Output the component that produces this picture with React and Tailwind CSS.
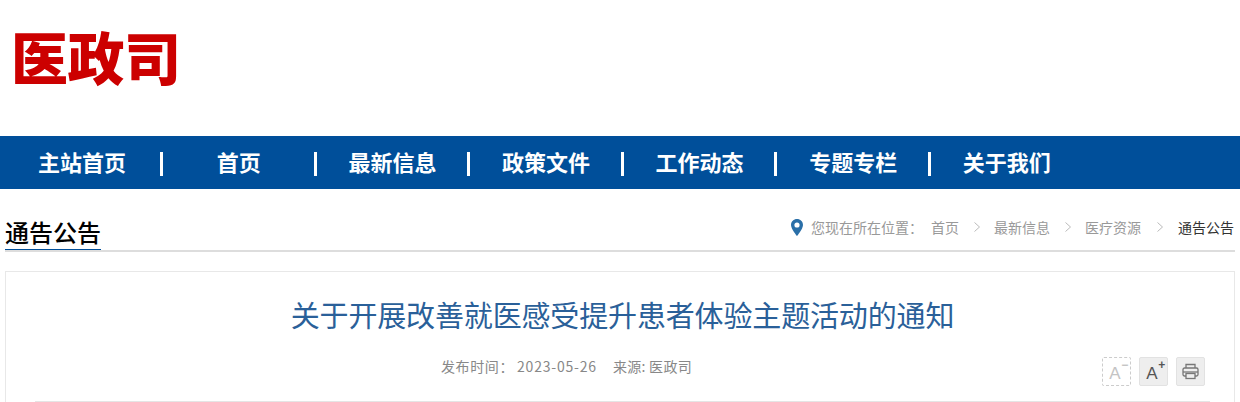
import React from 'react';

const cjk = "font-['Microsoft_YaHei','Noto_Sans_CJK_SC',sans-serif]";
const navItems = ['主站首页', '首页', '最新信息', '政策文件', '工作动态', '专题专栏', '关于我们'];
const crumbs = ['首页', '最新信息', '医疗资源'];

function PinIcon() {
  return (
    <svg width="12" height="17" viewBox="0 0 12 17" className="shrink-0">
      <path fillRule="evenodd" fill="#2a6fa8" d="M6 0C2.7 0 0 2.6 0 5.9 0 9.8 6 17 6 17s6-7.2 6-11.1C12 2.6 9.3 0 6 0zm0 3.4a2.6 2.6 0 1 1 0 5.2 2.6 2.6 0 0 1 0-5.2z" />
    </svg>
  );
}

function Chevron() {
  return (
    <svg width="6" height="10" viewBox="0 0 6 10" className="shrink-0">
      <path d="M0.5 0.5L5.5 5L0.5 9.5" fill="none" stroke="#aaa" strokeWidth="0.8" />
    </svg>
  );
}

function FontButton({ sign, dashed }) {
  return (
    <div className={dashed
      ? "w-[29px] h-[29px] rounded-[2px] border border-dashed border-[#ccc] bg-white flex items-center justify-center text-[#c4c4c4]"
      : "w-[29px] h-[29px] rounded-[2px] border border-[#e2e2e2] bg-[#eeeeee] flex items-center justify-center text-[#555]"}>
      <span className="relative mt-[3px] ml-[-3px] text-[17px] leading-none font-['Liberation_Sans',sans-serif]">
        A
        <span className="absolute left-[12px] top-[-6px] text-[12px] font-bold leading-none">{sign}</span>
      </span>
    </div>
  );
}

export default function App() {
  return (
    <div className={`w-[1240px] h-[402px] overflow-hidden bg-white ${cjk}`}>
      <div className="h-[136px] pl-[11px] pt-[19px]">
        <div className="text-[57px] leading-[72px] font-black text-[#cc0000] tracking-[-0.5px]">医政司</div>
      </div>

      <div className="h-[53px] bg-[#004f9a] flex pl-[2px]">
        {navItems.map((item, i) => (
          <div key={item} className={i === 0 ? "w-[160px] h-full flex items-center relative" : "w-[153.6px] h-full flex items-center relative"}>
            <span className="w-full text-center text-[22px] font-bold text-white mt-[-2px]">{item}</span>
            {i < navItems.length - 1 && (
              <span className="absolute right-[-1px] top-[16px] w-[3px] h-[24px] bg-white"></span>
            )}
          </div>
        ))}
      </div>

      <div className="mx-[5px] h-[63px] border-b-2 border-[#dddddd] flex items-end justify-between">
        <div className="text-[24px] leading-[30px] h-[33px] mb-[-1px] mt-[-2px] font-medium text-black border-b border-[#004f9a] relative top-[-1px]">通告公告</div>
        <div className="flex items-center h-[20px] mb-[13px] text-[14px] text-[#999] mr-[1px]">
          <PinIcon />
          <span className="ml-[8px]">您现在所在位置：</span>
          <span className="ml-[8px]">首页</span>
          {crumbs.slice(1).map((c) => (
            <React.Fragment key={c}>
              <span className="mx-[14.5px]"><Chevron /></span>
              <span>{c}</span>
            </React.Fragment>
          ))}
          <span className="mx-[15.5px]"><Chevron /></span>
          <span className="text-[#333]">通告公告</span>
        </div>
      </div>

      <div className="mx-[5px] mt-[19px] h-[200px] border border-[#e8e8e8] pl-[29px] pr-[24px]">
        <h1 className="mt-[22px] text-center text-[29px] leading-[40px] text-[#2a6099] font-normal tracking-[-0.15px]">关于开展改善就医感受提升患者体验主题活动的通知</h1>
        <div className="relative h-[51px] mt-[17px] border-b border-[#e5e5e5] flex pl-[406px]">
          <div className="text-[14px] leading-[20px] text-[#888] mt-[5px]">
            <span className="tracking-[0.6px]">发布时间：</span>
            <span className="ml-[3px] tracking-[0.8px]">2023-05-26</span>
            <span className="ml-[16px] tracking-[0.3px]">来源: 医政司</span>
          </div>
          <div className="absolute right-[5px] top-[6px] flex gap-[8px]">
            <FontButton sign="−" dashed />
            <FontButton sign="+" />
            <div className="w-[29px] h-[29px] rounded-[2px] border border-[#e2e2e2] bg-[#eeeeee] flex items-center justify-center">
              <svg width="17" height="17" viewBox="0 0 17 17" fill="none" stroke="#777" strokeWidth="1.3">
                <path d="M4 5V1.5h9V5" />
                <rect x="1" y="5" width="15" height="8" rx="1.5" />
                <path d="M1 9h15" />
                <rect x="4" y="10.5" width="9" height="5" fill="#eee" />
              </svg>
            </div>
          </div>
        </div>
      </div>
    </div>
  );
}
